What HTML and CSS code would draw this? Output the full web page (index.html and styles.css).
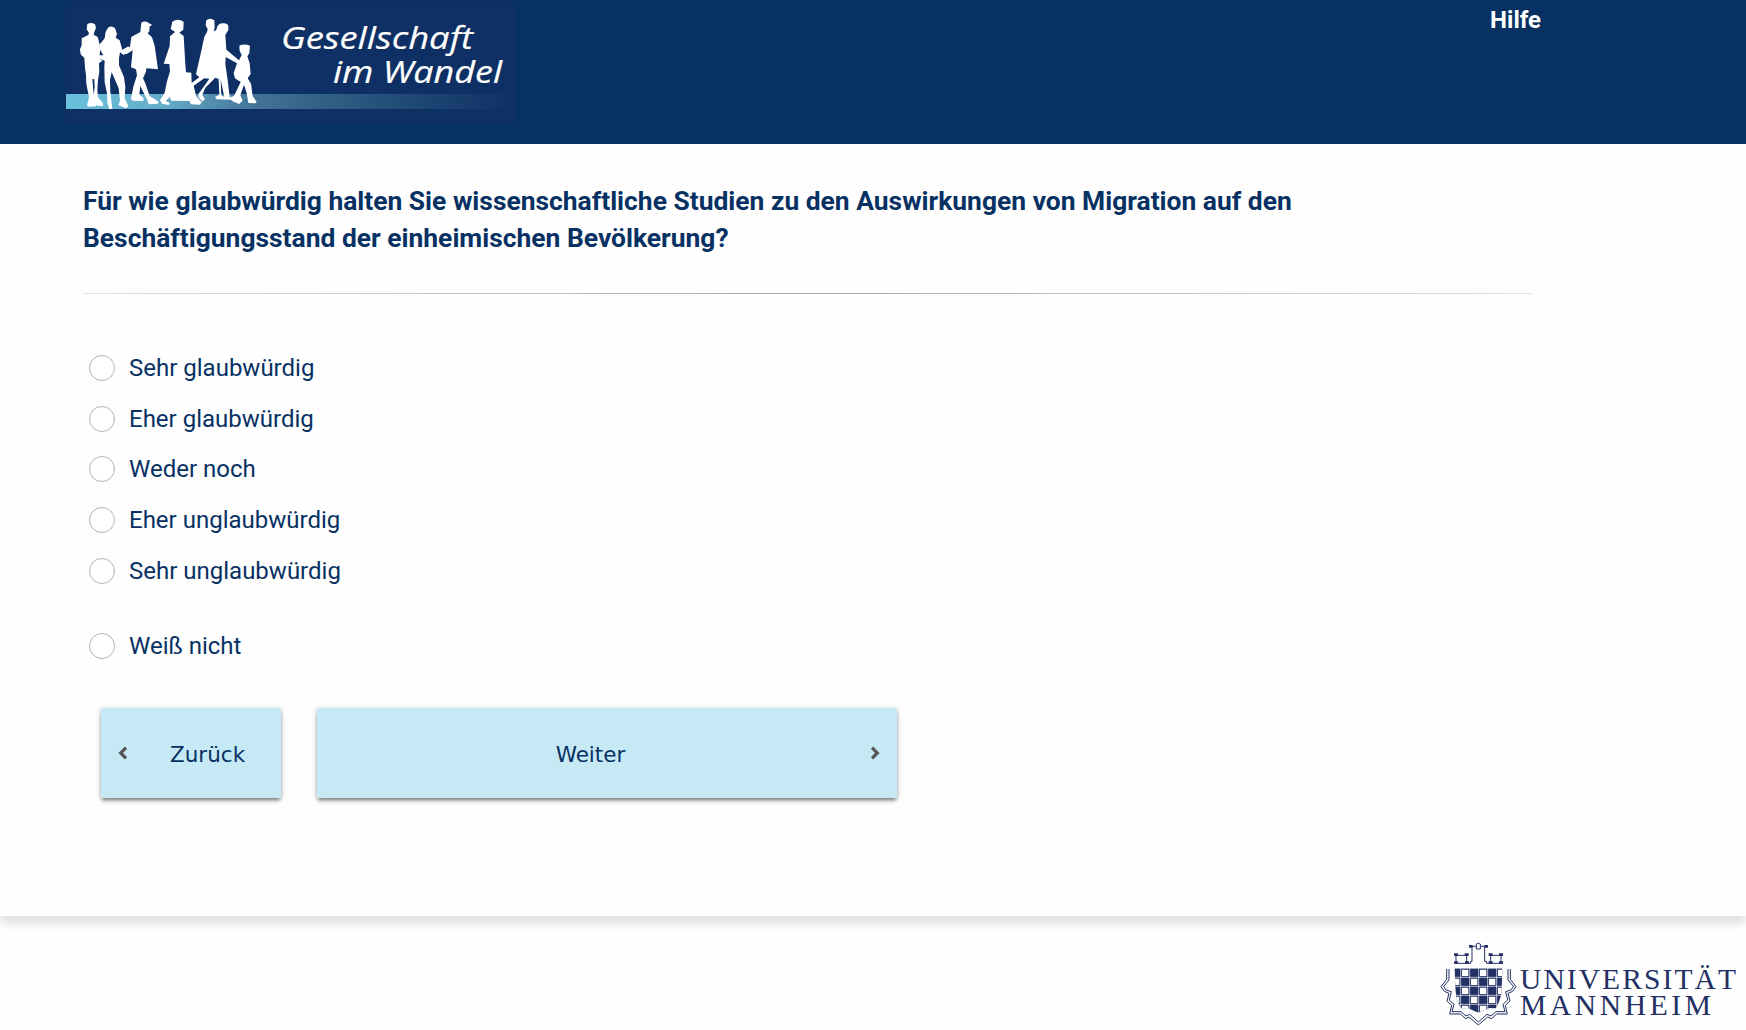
FILE: index.html
```html
<!DOCTYPE html>
<html lang="de">
<head>
<meta charset="utf-8">
<title>Gesellschaft im Wandel</title>
<link rel="stylesheet" href="styles.css">
</head>
<body>
<header class="header">
  <svg class="logo" width="450" height="123" viewBox="65 2 450 123" role="img" aria-label="Gesellschaft im Wandel">
    <defs>
      <linearGradient id="band" x1="0" x2="1" y1="0" y2="0">
        <stop offset="0" stop-color="#69c1dc"/>
        <stop offset=".22" stop-color="#64acc8"/>
        <stop offset=".42" stop-color="#427396"/>
        <stop offset=".7" stop-color="#24517a"/>
        <stop offset="1" stop-color="#0f3064"/>
      </linearGradient>
    </defs>
    <rect x="65" y="2" width="450" height="123" fill="#0f3064"/>
    <rect x="66" y="94" width="449" height="15" fill="url(#band)"/>
    <g transform="translate(50 0) scale(.33333)" fill="#fff">
      <path d="M112 72Q124 66 135 73L138 84 133 96 131 104 143 111 148 130 151 145 148 175 157 182 147 190 148 215 144 240 142 270 144 292 158 308 160 317 146 318 138 315 139 319 116 320 111 316 117 292 109 252 108 225 105 203 103 174 92 163 90 148 95 136 95 115 115 105 117 99 110 88ZM127 237L131 285 134 262 133 238Z" fill-rule="evenodd"/>
      <path d="M174 83Q184 75 195 84L201 102 197 113 209 121 217 150 235 139 242 147 221 165 210 157 207 175 207 196 222 232 226 260 224 295 235 318 228 325 205 315 210 302 206 265 185 216 180 240 181 275 187 326 178 328 172 307 171 280 164 247 163 204 164 182 145 175 143 166 160 166 151 151 144 151 141 143 164 115 167 95Z"/>
      <path d="M274 68Q286 61 296 69L307 75 299 79 298 94 293 100 306 112 314 137 324 208 289 205 288 215 279 235 286 250 299 288 326 305 324 311 296 313 292 300 284 285 271 258 268 283 281 295 280 303 248 302 243 296 250 260 261 226 258 208 243 202 248 151 229 163 215 157 220 148 240 141 244 111 271 96Z"/>
      <path d="M367 65Q383 54 401 65L400 89 388 98 401 108 406 193 408 217 424 218 425 249 448 232 438 223 455 148 463 110 471 96 473 88 467 76 469 61Q480 51 493 61L494 82 491 94 499 90Q502 69 518 70Q532 68 535 78L535 90 526 105 529 149 567 181 575 165 569 153 568 137Q582 130 600 137L598 160 592 169 599 190 602 222 593 235 603 251 608 288 620 306 616 310 595 309 590 279 582 254 571 286 578 302 567 312 548 304 542 299 500 298 495 291 508 284 506 237 496 233 466 263 457 285 465 297 457 305 445 291 446 281 478 236 463 235 431 257 438 288 455 307 450 314 423 313 418 303 364 302 359 291 347 303 360 310 356 315 336 311 330 301 344 278 351 244 360 214 358 192 341 191 359 138 360 109 375 96 362 87Z M527 171L526 193 533 240 539 292 552 288 572 246 555 235 551 220 561 190Z M512 238L514 286 523 291Z" fill-rule="evenodd"/>
    </g>
    <g class="logo-text">
      <text x="281" y="49" textLength="192" lengthAdjust="spacingAndGlyphs">Gesellschaft</text>
      <text x="333" y="83" textLength="169" lengthAdjust="spacingAndGlyphs">im Wandel</text>
    </g>
  </svg>
  <a class="help">Hilfe</a>
</header>
<main class="main">
  <h1 class="question">Für wie glaubwürdig halten Sie wissenschaftliche Studien zu den Auswirkungen von Migration auf den<br>Beschäftigungsstand der einheimischen Bevölkerung?</h1>
  <div class="divider"></div>
  <div class="options">
    <label class="option"><input class="radio" type="radio" name="answer">Sehr glaubwürdig</label>
    <label class="option"><input class="radio" type="radio" name="answer">Eher glaubwürdig</label>
    <label class="option"><input class="radio" type="radio" name="answer">Weder noch</label>
    <label class="option"><input class="radio" type="radio" name="answer">Eher unglaubwürdig</label>
    <label class="option"><input class="radio" type="radio" name="answer">Sehr unglaubwürdig</label>
    <label class="option option-separate"><input class="radio" type="radio" name="answer">Weiß nicht</label>
  </div>
  <div class="buttons">
    <button class="button back"><svg class="chevron" width="10" height="14" viewBox="0 0 10 14"><path d="M8 1.7 2.7 7 8 12.3"/></svg><span class="back-label">Zurück</span></button>
    <button class="button next"><span class="next-label">Weiter</span><svg class="chevron" width="10" height="14" viewBox="0 0 10 14"><path d="M2 1.7 7.3 7 2 12.3"/></svg></button>
  </div>
</main>
<footer class="footer">
  <svg class="university" width="306" height="90" viewBox="1440 940 306 90" role="img" aria-label="Universität Mannheim">
    <g transform="translate(1430 930) scale(.33333)">
      <g fill="none" stroke="#233063" stroke-width="3">
        <path d="M73 100H122V94H126V49M164 49V94H170V100H218M78 74V98M110 74V98M182 74V98M213 74V98M78 76H110M182 76H213M118 49H138M152 49H171M139 42Q145 37 151 42V57H139Z"/>
        <path d="M50 117V148L33 170 43 184 57 190 51 213 65 226 59 252H91L107 266 117 261 145 285 173 261 184 266 200 252H232L226 226 240 213 234 190 248 184 258 170 241 148V117"/>
        <path d="M57 117V150L41 169 48 180 64 185 58 210 72 223 66 245H93L108 258 119 253 145 276 171 253 183 258 198 245H225L219 223 233 210 227 185 243 180 250 169 234 150V117"/>
      </g>
      <path d="M72 70h12v8H72ZM104 70h12v8h-12ZM176 70h12v8h-12ZM207 70h12v8h-12ZM117 45h11v8h-11ZM163 45h11v8h-11ZM72 94h12v7H72ZM105 94h12v7h-12ZM176 94h12v7h-12ZM207 94h12v7h-12Z" fill="#233063"/>
      <clipPath id="shield"><path d="M73 115H218L214 190Q208 220 197 235L178 234 145 248 113 234 94 235Q80 218 77 185Z"/></clipPath>
      <g clip-path="url(#shield)">
        <path d="M73 115H218V250H73Z" fill="#233063"/>
        <path d="M92 115V250M119 115V250M146 115V250M173 115V250M200 115V250M70 142H220M70 169H220M70 196H220M70 223H220" stroke="#fff" stroke-width="2"/>
        <path d="M96 119h19v19H96ZM150 119h19v19h-19ZM204 119h19v19h-19ZM69 146h19v19H69ZM123 146h19v19h-19ZM177 146h19v19h-19ZM96 173h19v19H96ZM150 173h19v19h-19ZM204 173h19v19h-19ZM69 200h19v19H69ZM123 200h19v19h-19ZM177 200h19v19h-19ZM96 227h19v19H96ZM150 227h19v19h-19Z" fill="#fff"/>
      </g>
    </g>
    <g class="university-text">
      <text x="1520" y="989" textLength="216">UNIVERSITÄT</text>
      <text x="1520" y="1015" textLength="191">MANNHEIM</text>
    </g>
  </svg>
</footer>
</body>
</html>
```
FILE: styles.css
```css
* { box-sizing: border-box; }
body {
  margin: 0;
  height: 1030px;
  display: flex;
  flex-direction: column;
  background: #fefefe;
  color: #083163;
  font-family: Roboto, sans-serif;
  overflow: hidden;
}
.header {
  height: 144px;
  flex: none;
  display: flex;
  justify-content: space-between;
  align-items: flex-start;
  padding: 2px 205px 0 65px;
  background: #083163;
}
.logo, .university { display: block; }
.logo-text {
  fill: #fff;
  stroke: #fff;
  stroke-width: .2;
  font: italic 31px "Open Sans", sans-serif;
}
.help {
  color: #fff;
  font-size: 24px;
  font-weight: 700;
  line-height: 28px;
  padding-top: 4px;
}
.main {
  height: 772px;
  flex: none;
  padding: 38px 0 0 83px;
  background: #fefefe;
  box-shadow: 0 8px 8px rgba(0, 0, 0, .11);
}
.question {
  margin: 0;
  font-size: 26.42px;
  font-weight: 700;
  line-height: 37px;
  white-space: nowrap;
}
.divider {
  width: 1449px;
  height: 1px;
  margin-top: 37px;
  background: linear-gradient(90deg, #e2e2e2, #a8a8a8 50%, #e2e2e2);
}
.options {
  padding: 49px 0 0 6px;
}
.option {
  display: flex;
  align-items: center;
  gap: 14px;
  height: 50.6px;
  font-size: 24px;
}
.option-separate { margin-top: 24.5px; }
.radio {
  appearance: none;
  width: 26px;
  height: 26px;
  margin: 0;
  border: 1px solid #b4b4b4;
  border-radius: 50%;
  background: #fff;
}
.buttons {
  display: flex;
  gap: 36px;
  padding: 36.9px 0 0 18px;
}
.button {
  height: 90px;
  display: flex;
  align-items: center;
  border: 0;
  background: #c5e9f5;
  color: #083163;
  font: 21.5px "DejaVu Sans", sans-serif;
  box-shadow: 0 3px 4px -1px rgba(0, 0, 0, .5), 0 1px 6px rgba(0, 0, 0, .16);
}
.back {
  width: 180px;
  padding: 1px 0 0 17px;
  gap: 42px;
}
.back-label { padding-top: 2px; }
.next {
  width: 580px;
  padding: 1px 17px 0 0;
}
.next-label {
  flex: 1;
  padding: 2px 6px 0 0;
  text-align: center;
}
.chevron {
  fill: none;
  stroke: #555;
  stroke-width: 3.2;
}
.footer {
  flex: 1;
  display: flex;
  justify-content: flex-end;
  align-items: flex-end;
}
.university-text {
  fill: #233063;
  font: 29.5px "Liberation Serif", serif;
}
```
